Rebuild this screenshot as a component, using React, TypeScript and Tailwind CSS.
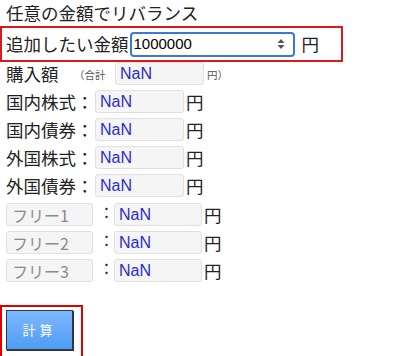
import React from "react"

const jp = "font-['Noto_Sans_CJK_JP','Noto_Sans',sans-serif]"
const numFont = "font-['Liberation_Sans',Arial,sans-serif]"

function NanBox({ w = "w-[89px]" }: { w?: string }) {
  return (
    <input
      readOnly
      value="NaN"
      className={`${w} h-[23px] rounded-[3px] border border-[#e0e0e0] bg-[#f5f5f5] px-[4px] text-[16px] text-[#2a2ad6] outline-none ${numFont}`}
    />
  )
}

function Row({ label }: { label: string }) {
  return (
    <div className="flex h-[28px] items-start">
      <span className="w-[89px] leading-[23px]">{label}</span>
      <NanBox />
      <span className="ml-[2px] leading-[23px]">円</span>
    </div>
  )
}

function FreeRow({ name }: { name: string }) {
  return (
    <div className="flex h-[28px] items-start">
      <input
        readOnly
        value={name}
        className={`h-[23px] w-[87px] rounded-[3px] border border-[#e0e0e0] bg-[#f5f5f5] px-[5px] text-[16px] text-[#8a8a8a] outline-none ${jp}`}
      />
      <span className="w-[21px] pl-[6px] text-[15px] leading-[18px]">：</span>
      <NanBox w="w-[88px]" />
      <span className="ml-[2px] leading-[23px]">円</span>
    </div>
  )
}

export default function App() {
  return (
    <div className={`h-[356px] w-[400px] overflow-hidden bg-white text-[17.5px] text-[#222] ${jp}`}>
      <div className="flex h-[26px] items-center pl-[6px]">任意の金額でリバランス</div>

      {/* additional amount */}
      <div className="flex h-[36px] w-[343px] items-center border-2 border-[#d9191c] pl-[4px]">
        <span>追加したい金額</span>
        <div className="ml-[1px] flex h-[25px] w-[165px] items-center rounded-[4px] border-2 border-[#3b78d8] pl-[2px] pr-[8px]">
          <input
            defaultValue="1000000"
            className={`w-full bg-transparent text-[15px] text-black outline-none ${numFont}`}
          />
          <svg width="8" height="12" viewBox="0 0 8 12" className="shrink-0">
            <path d="M4 1 L7.5 5 H0.5 Z" fill="#555" />
            <path d="M4 11 L7.5 7 H0.5 Z" fill="#555" />
          </svg>
        </div>
        <span className="ml-[7px]">円</span>
      </div>

      <div className="pl-[6px]">
        <div className="flex h-[28px] items-start">
          <span className="w-[68px] leading-[23px]">購入額</span>
          <span className="mt-[5px] w-[41px] text-[10.5px] text-[#555]">（合計</span>
          <NanBox />
          <span className="ml-[3px] mt-[5px] text-[10.5px] text-[#555]">円）</span>
        </div>
        <Row label="国内株式：" />
        <Row label="国内債券：" />
        <Row label="外国株式：" />
        <div className="h-[29px]">
          <Row label="外国債券：" />
        </div>
        <FreeRow name="フリー1" />
        <FreeRow name="フリー2" />
        <FreeRow name="フリー3" />
      </div>

      <div className="mt-[18px] w-[83px] border-2 border-[#e00000] px-[4px] pt-[3px] pb-[8px]">
        <button className="h-[40px] w-[67px] border border-[#2b3a4a] bg-gradient-to-b from-[#7fb8ff] to-[#4d9cf2] text-[13px] tracking-[4px] text-white shadow-[1px_1px_0_#333]">
          計算
        </button>
      </div>
    </div>
  )
}
